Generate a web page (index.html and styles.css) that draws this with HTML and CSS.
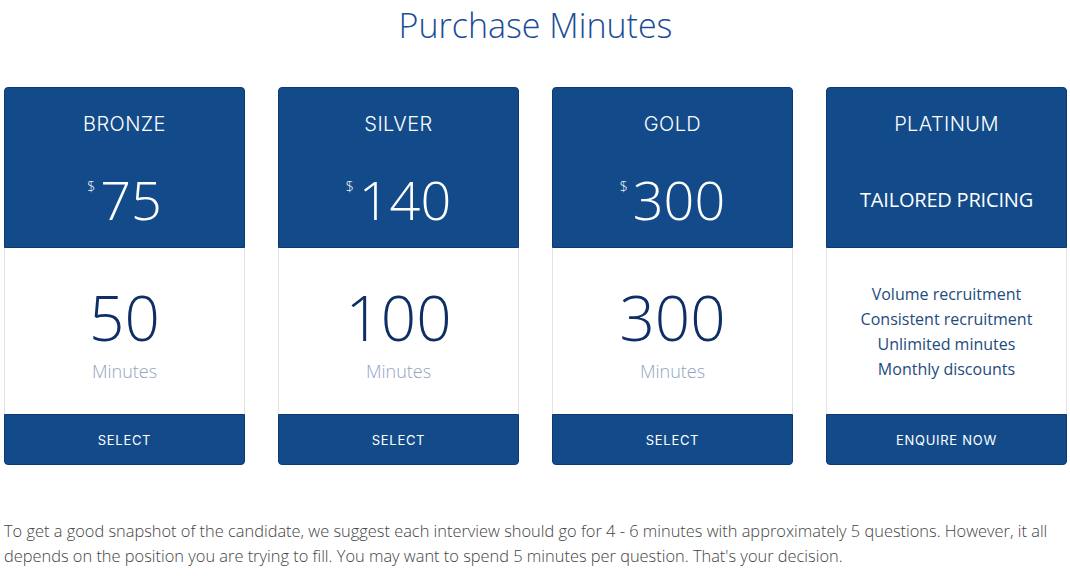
FILE: index.html
```html
<!DOCTYPE html>
<html lang="en">
<head>
<meta charset="utf-8">
<title>Purchase Minutes</title>
<link rel="stylesheet" href="styles.css">
</head>
<body>
<main class="page">
  <h1 class="title">Purchase Minutes</h1>
  <section class="plans">
    <article class="plan">
      <header class="plan-head">
        <h2 class="plan-name">BRONZE</h2>
        <div class="price"><div class="price-inner"><span class="currency">$</span><span class="amount">75</span></div></div>
      </header>
      <div class="plan-body">
        <div class="minutes">50</div>
        <div class="unit">Minutes</div>
      </div>
      <a class="plan-btn" href="#">SELECT</a>
    </article>
    <article class="plan">
      <header class="plan-head">
        <h2 class="plan-name">SILVER</h2>
        <div class="price"><div class="price-inner"><span class="currency">$</span><span class="amount">140</span></div></div>
      </header>
      <div class="plan-body">
        <div class="minutes">100</div>
        <div class="unit">Minutes</div>
      </div>
      <a class="plan-btn" href="#">SELECT</a>
    </article>
    <article class="plan">
      <header class="plan-head">
        <h2 class="plan-name">GOLD</h2>
        <div class="price"><div class="price-inner"><span class="currency">$</span><span class="amount">300</span></div></div>
      </header>
      <div class="plan-body">
        <div class="minutes">300</div>
        <div class="unit">Minutes</div>
      </div>
      <a class="plan-btn" href="#">SELECT</a>
    </article>
    <article class="plan">
      <header class="plan-head">
        <h2 class="plan-name">PLATINUM</h2>
        <div class="price"><span class="tailored">TAILORED PRICING</span></div>
      </header>
      <div class="plan-body">
        <ul class="features">
          <li>Volume recruitment</li>
          <li>Consistent recruitment</li>
          <li>Unlimited minutes</li>
          <li>Monthly discounts</li>
        </ul>
      </div>
      <a class="plan-btn" href="#">ENQUIRE NOW</a>
    </article>
  </section>
  <p class="note">To get a good snapshot of the candidate, we suggest each interview should go for 4 - 6 minutes with approximately 5 questions. However, it all depends on the position you are trying to fill. You may want to spend 5 minutes per question. That's your decision.</p>
</main>
</body>
</html>
```

FILE: styles.css
```css
* { box-sizing: border-box; }

html, body {
  margin: 0;
  padding: 0;
  background: #ffffff;
}

body {
  font-family: "Open Sans", "Liberation Sans", sans-serif;
  color: #444;
}

.page {
  padding: 0 3px 0 4px;
}

.title {
  margin: 0;
  padding-top: 1px;
  height: 87px;
  text-align: center;
  font-weight: 300;
  font-size: 34px;
  line-height: 48px;
  color: #1a4d96;
}

.plans {
  display: grid;
  grid-template-columns: repeat(4, 1fr);
  column-gap: 33px;
}

.plan {
  display: flex;
  flex-direction: column;
}

.plan-head {
  height: 161px;
  background: #134b8a;
  border: 1px solid #0c3a70;
  border-radius: 4px 4px 0 0;
  color: #ffffff;
  display: flex;
  flex-direction: column;
  align-items: center;
}

.plan-name {
  margin: 0;
  padding-top: 22px;
  font-family: Inter, "Open Sans", sans-serif;
  font-weight: 350;
  font-size: 20px;
  line-height: 28px;
  letter-spacing: 0.4px;
}

.price {
  flex: 1;
  display: flex;
  align-items: center;
  justify-content: center;
  padding-top: 12px;
}

.price-inner {
  display: flex;
  align-items: flex-start;
}

.currency {
  font-weight: 300;
  font-size: 14px;
  line-height: 1;
  margin-top: 8px;
  margin-right: 5px;
}

.amount {
  font-weight: 300;
  font-size: 54px;
  line-height: 54px;
}

.tailored {
  font-weight: 400;
  font-size: 20px;
  line-height: 28px;
  letter-spacing: -0.2px;
  margin-top: 3px;
}

.plan-body {
  height: 166px;
  border-left: 1px solid #e3e3e3;
  border-right: 1px solid #e3e3e3;
  display: flex;
  flex-direction: column;
  align-items: center;
  justify-content: center;
}

.minutes {
  font-weight: 300;
  font-size: 62px;
  line-height: 72px;
  color: #0e2f66;
  margin-top: 2px;
}

.unit {
  font-weight: 300;
  font-size: 18px;
  line-height: 24px;
  color: #93a4bf;
  margin-top: 6px;
}

.features {
  list-style: none;
  margin: 2px 0 0;
  padding: 0;
  text-align: center;
  font-size: 16px;
  line-height: 25px;
  font-weight: 400;
  color: #234b7e;
}

.plan-btn {
  display: flex;
  align-items: center;
  justify-content: center;
  height: 51px;
  background: #134b8a;
  border: 1px solid #0c3a70;
  border-radius: 0 0 4px 4px;
  color: #ffffff;
  text-decoration: none;
  font-family: Inter, "Open Sans", sans-serif;
  font-size: 13px;
  font-weight: 400;
  letter-spacing: 0.7px;
}

.note {
  margin: 53px 0 0;
  font-weight: 300;
  font-size: 16.4px;
  line-height: 25px;
  color: #444;
}
```
